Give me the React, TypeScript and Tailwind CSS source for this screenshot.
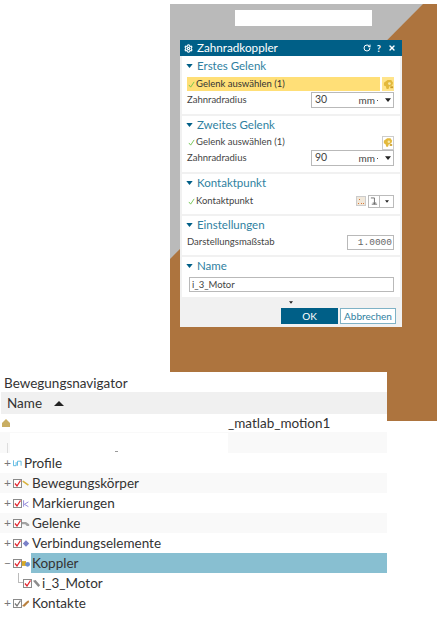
import React from 'react';
import { Settings, RotateCw, X } from 'lucide-react';

const Triangle: React.FC<{ className?: string }> = ({ className }) => (
  <svg viewBox="0 0 8 5" className={className}>
    <path d="M0 0h8L4 5z" fill="currentColor" />
  </svg>
);

const Tick = () => (
  <svg viewBox="0 0 8 8" className="h-[7px] w-[7px] shrink-0">
    <path d="M1 4.5 3 7 7 1" fill="none" stroke="#6cc24a" strokeWidth="1" />
  </svg>
);

const JointIcon = () => (
  <svg viewBox="0 0 12 12" className="h-[11px] w-[11px]">
    <path d="M1 4 5 1h4l2 3-1 3-3 1-1 3H4L3 8 1 7z" fill="#e3b93c" />
    <circle cx="7" cy="5" r="1.5" fill="#f7e9a8" />
    <path d="M8 8h3v2H8z" fill="#c99a24" />
  </svg>
);

const Section: React.FC<{ title: string; className: string; children?: React.ReactNode }> = ({ title, className, children }) => (
  <div className={`bg-white mx-[2px] mb-[2px] ${className}`}>
    <div className="flex items-center h-[19px] pb-[2px] pl-[4px] gap-[4px]">
      <Triangle className="w-[7px] h-[4px] text-[#005f87]" />
      <span className="text-[11.5px] leading-none text-[#2f7f9f]">{title}</span>
    </div>
    {children}
  </div>
);

const UnitInput: React.FC<{ value: string }> = ({ value }) => (
  <div className="flex items-center w-[83px] h-[16px] border border-[#b9b9b9] bg-white pl-[3px] pr-[2px] text-[10.5px] text-[#444]">
    <span className="flex-1">{value}</span>
    <span className="text-[10px]">mm</span>
    <span className="w-[1px] h-[1px] bg-[#555] ml-[2px] mr-[7px]" />
    <Triangle className="w-[6px] h-[4px] text-[#222]" />
  </div>
);

const Dialog = () => (
  <div className="absolute left-[10px] top-[36px] w-[222px] h-[287px] flex flex-col bg-[#f1f1f1] font-['Lato',sans-serif]">
    <div className="flex items-center h-[16px] bg-[#005f87] text-white pl-[2px] pr-[6px]">
      <Settings className="w-[9px] h-[9px] mx-[2px]" strokeWidth={3} />
      <span className="flex-1 pl-[2px] text-[11.7px] leading-none">Zahnradkoppler</span>
      <RotateCw className="w-[8px] h-[8px] mr-[6px]" strokeWidth={3} />
      <span className="text-[9px] font-bold leading-none mr-[7px]">?</span>
      <X className="w-[8px] h-[8px]" strokeWidth={4} />
    </div>

    <Section title="Erstes Gelenk" className="h-[58px] pt-[1px]">
      <div className="flex items-center pl-[5px] pr-[6px] mt-[1px] gap-[2px]">
        <div className="flex items-center gap-[1px] w-[193px] h-[14px] bg-[#ffdf77] pl-[1px] text-[9.5px] text-[#333]">
          <Tick />
          <span>Gelenk auswählen (1)</span>
        </div>
        <div className="flex items-center justify-center w-[12px] h-[14px] bg-[#ffe48a]"><JointIcon /></div>
      </div>
      <div className="flex items-center justify-between pl-[5px] pr-[6px] mt-[1px] text-[9.5px] text-[#444]">
        <span>Zahnradradius</span>
        <UnitInput value="30" />
      </div>
    </Section>

    <Section title="Zweites Gelenk" className="h-[56px]">
      <div className="flex items-center justify-between pl-[6px] pr-[6px] text-[9.5px] text-[#444] h-[15px]">
        <div className="flex items-center gap-[1px]"><Tick /><span>Gelenk auswählen (1)</span></div>
        <div className="flex items-center justify-center w-[12px] h-[14px] border border-[#ccc]"><JointIcon /></div>
      </div>
      <div className="flex items-center justify-between pl-[5px] pr-[6px] text-[9.5px] text-[#444]">
        <span>Zahnradradius</span>
        <UnitInput value="90" />
      </div>
    </Section>

    <Section title="Kontaktpunkt" className="h-[40px]">
      <div className="flex items-center pl-[6px] pr-[6px] mt-[1px] text-[9.5px] text-[#444]">
        <Tick />
        <span className="flex-1 pl-[1px]">Kontaktpunkt</span>
        <svg viewBox="0 0 10 10" className="w-[10px] h-[10px] mr-[2px]">
          <rect x=".5" y=".5" width="9" height="9" fill="#f1e8da" stroke="#ccc" />
          <path d="M3 3h1v1H3zM2 7h1v1H2zM5 7h1v1H5zM7 7h1v1H7z" fill="#d9783a" />
        </svg>
        <div className="flex items-center justify-center w-[12px] h-[13px] border border-[#bbb]">
          <svg viewBox="0 0 9 10" className="w-[8px] h-[9px]">
            <path d="M1 1h4v7M2 8h6M3.5 6 5 8l1.5-2" fill="none" stroke="#666" />
          </svg>
        </div>
        <div className="flex items-center justify-center w-[14px] h-[13px] border border-l-0 border-[#bbb]">
          <Triangle className="w-[4px] h-[3px] text-[#222]" />
        </div>
      </div>
    </Section>

    <Section title="Einstellungen" className="h-[39px]">
      <div className="flex items-center justify-between pl-[5px] pr-[6px] text-[9.5px] text-[#444]">
        <span>Darstellungsmaßstab</span>
        <div className="w-[47px] h-[15px] border border-[#b9b9b9] text-right pr-[1px] text-[9.5px] leading-[13px] text-[#666] font-['Liberation_Mono',monospace]">1.0000</div>
      </div>
    </Section>

    <Section title="Name" className="h-[40px]">
      <div className="ml-[7px] mr-[6px] mt-[1px] h-[15px] border border-[#b9b9b9] px-[2px] text-[9.5px] leading-[13px] text-[#444]">i_3_Motor</div>
    </Section>

    <div className="flex justify-center pt-[2px]">
      <Triangle className="w-[4px] h-[3px] text-[#222]" />
    </div>
    <div className="flex justify-end gap-[2px] pr-[6px] mt-[4px]">
      <button className="w-[57px] h-[16px] bg-[#005f87] text-white text-[10px] leading-none">OK</button>
      <button className="w-[56px] h-[16px] bg-white border border-[#7fb2c6] text-[#2f7f9f] text-[10px] leading-none">Abbrechen</button>
    </div>
  </div>
);

const CheckBox: React.FC<{ muted?: boolean }> = ({ muted }) => (
  <svg viewBox="0 0 9 9" className="w-[9px] h-[9px] shrink-0">
    <rect x=".5" y=".5" width="8" height="8" fill="#fff" stroke="#8a8a8a" />
    <path d="M2 4.5 4 7l3.5-5.5" fill="none" stroke={muted ? '#777' : '#e2232c'} strokeWidth="1.3" />
  </svg>
);

const rowIcons: Record<string, React.ReactNode> = {
  Bewegungskörper: <path d="M1 2 8 7" stroke="#d9b23c" strokeWidth="2" fill="none" />,
  Markierungen: <path d="M2 1v8M3 6l5-3M3 6l5 3" stroke="#7a6fd0" strokeWidth="1" fill="none" />,
  Gelenke: <path d="M0 3h5l4 3v2H6L4 6H0z" fill="#a3a3a3" />,
  Verbindungselemente: <path d="M1 5 5 1l4 4-4 4z" fill="#7b82c9" />,
  Koppler: <g><path d="M0 2h5v6H0z" fill="#d6a927" /><circle cx="7" cy="6" r="3" fill="#6d8fd0" /></g>,
  Kontakte: <path d="M0 8 5 3l2 2-4 4zM5 3l3-2 1 2-2 2z" fill="#b9803f" />,
};

const TreeRow: React.FC<{ label: string; sign?: string; stripe?: boolean; active?: boolean; muted?: boolean }> = ({ label, sign = '+', stripe, active, muted }) => (
  <div className={`flex items-center h-[20px] pl-[4px] ${stripe ? 'bg-[#f9f9f9]' : ''}`}>
    <span className="w-[9px] text-[12px] leading-none text-[#777]">{sign}</span>
    <CheckBox muted={muted} />
    <svg viewBox="0 0 10 10" className="w-[8px] h-[9px] shrink-0 mr-[1px]">{rowIcons[label]}</svg>
    <span className={`flex-1 h-[20px] pl-[1px] text-[13.5px] leading-[20px] text-[#333] ${active ? 'bg-[#88bfd1]' : ''}`}>{label}</span>
  </div>
);

const Navigator = () => (
  <div className="w-[387px] pt-[2px] font-['Lato',sans-serif]">
    <div className="h-[18px] pl-[4px] text-[13.5px] leading-[18px] text-[#333]">Bewegungsnavigator</div>
    <div className="flex items-center h-[22px] pl-[6px] ml-[1px] bg-[#f0f0f0] text-[13.5px] text-[#333]">
      <span>Name</span>
      <svg viewBox="0 0 10 5" className="w-[10px] h-[5px] ml-[12px]"><path d="M0 5h10L5 0z" fill="#222" /></svg>
    </div>
    <div className="flex items-center justify-between h-[18px] pl-[2px] text-[13.5px] text-[#333]">
      <svg viewBox="0 0 8 8" className="w-[8px] h-[8px]"><path d="M0 4 4 0l4 4v4H0z" fill="#c9ae62" /></svg>
      <span className="w-[159px]">_matlab_motion1</span>
    </div>
    <div className="h-[21px] bg-[#f9f9f9] flex items-end">
      <div className="w-[1px] h-[10px] ml-[7px] bg-[#ddd]" />
      <div className="flex items-end w-[218px] h-[20px] ml-[2px] pl-[105px] pb-[1px] bg-white">
        <div className="w-[3px] h-[1px] bg-[#999]" />
      </div>
    </div>
    <div className="flex items-center h-[20px] pl-[4px]">
      <span className="w-[9px] text-[12px] leading-none text-[#777]">+</span>
      <svg viewBox="0 0 10 8" className="w-[9px] h-[8px] shrink-0 mr-[2px]"><path d="M.5 1v6h3V3M5 7V2h4v5" fill="none" stroke="#52b4e0" /></svg>
      <span className="text-[13.5px] leading-[20px] text-[#333]">Profile</span>
    </div>
    <TreeRow label="Bewegungskörper" stripe />
    <TreeRow label="Markierungen" />
    <TreeRow label="Gelenke" stripe />
    <TreeRow label="Verbindungselemente" />
    <TreeRow label="Koppler" sign="−" active />
    <div className="flex items-center h-[20px] pl-[18px]">
      <div className="w-[5px] h-[10px] mb-[10px] border-l border-b border-[#bbb]" />
      <CheckBox />
      <svg viewBox="0 0 10 10" className="w-[9px] h-[9px] shrink-0 mr-[1px]"><path d="M1 2 4 1l5 6-2 2z" fill="#8c8c8c" /></svg>
      <span className="text-[13.5px] leading-[20px] text-[#333]">i_3_Motor</span>
    </div>
    <TreeRow label="Kontakte" muted />
  </div>
);

export default function App() {
  return (
    <div className="w-[439px] h-[617px] bg-white overflow-hidden">
      <div className="relative ml-[170px] mt-[4px] w-[267px] h-[368px] bg-[#ad743e]">
        <svg viewBox="0 0 267 368" className="w-full h-full">
          <path d="M0 0h253L0 255z" fill="#bababa" />
        </svg>
        <div className="absolute left-[65px] top-[6px] w-[137px] h-[16px] bg-white" />
        <Dialog />
      </div>
      <div className="flex items-start">
        <Navigator />
        <div className="w-[50px] h-[49px] bg-[#ad743e]" />
      </div>
    </div>
  );
}
